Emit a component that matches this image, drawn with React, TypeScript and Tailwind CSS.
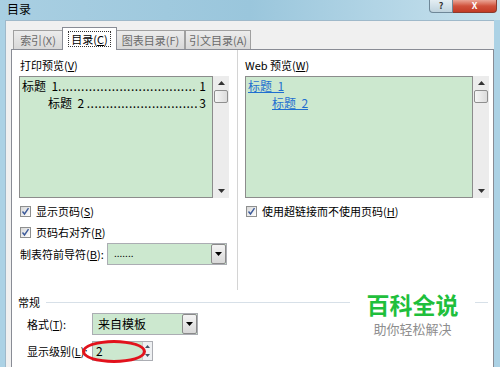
import React from "react";

const Check = () => (
  <span className="w-[11px] h-[11px] border border-[#8e8f8f] bg-linear-to-br from-[#d8d8d8] to-white flex items-center justify-center shrink-0">
    <svg width="9" height="9" viewBox="0 0 9 9">
      <path d="M1.5 4.5 L3.5 7 L7.5 1.2" stroke="#3c5a9a" strokeWidth="1.4" fill="none" />
    </svg>
  </span>
);

const DropBtn = () => (
  <span className="w-[15px] h-full border border-[#8a8a8a] rounded-[2px] bg-linear-to-b from-[#f4f4f4] to-[#d8d8d8] flex items-center justify-center shrink-0">
    <svg width="7" height="4" viewBox="0 0 7 4">
      <path d="M0 0 L7 0 L3.5 4 Z" fill="#000" />
    </svg>
  </span>
);

const ScrollBar = () => (
  <div className="w-[16px] h-full bg-[#ececec] flex flex-col items-center shrink-0">
    <div className="h-[14px] flex items-center justify-center">
      <svg width="7" height="4" viewBox="0 0 7 4">
        <path d="M0 4 L7 4 L3.5 0 Z" fill="#333" />
      </svg>
    </div>
    <div className="w-[14px] h-[13px] border border-[#8f8f8f] rounded-[2px] bg-linear-to-r from-[#f6f6f6] to-[#dcdcdc]" />
    <div className="flex-1" />
    <div className="h-[14px] flex items-center justify-center">
      <svg width="7" height="4" viewBox="0 0 7 4">
        <path d="M0 0 L7 0 L3.5 4 Z" fill="#333" />
      </svg>
    </div>
  </div>
);

const Tab = ({ label, acc, w, selected }: { label: string; acc: string; w: string; selected?: boolean }) =>
  selected ? (
    <div className={`${w} h-[23px] bg-white border border-b-0 border-[#898c95] -mx-px flex items-center justify-center relative z-10 text-black`}>
      <span className="border border-dotted border-[#333] px-[2px] leading-[14px]">
        {label}(<u>{acc}</u>)
      </span>
    </div>
  ) : (
    <div className={`${w} h-[20px] bg-linear-to-b from-[#ececec] to-[#d8d8d8] border border-[#a0a0a0] flex items-center justify-center text-[#6a6a6a]`}>
      <span>
        {label}({acc})
      </span>
    </div>
  );

export default function App() {
  return (
    <div className="w-[500px] h-[367px] overflow-hidden flex flex-col bg-[#acd2e5] relative font-['Noto_Sans_CJK_SC','Noto_Sans',sans-serif] text-[11px] text-black">
      {/* title bar */}
      <div className="h-[20px] flex items-start bg-linear-to-r from-[#a9cfe2] via-[#9ac6dc] to-[#c8e2ee] shrink-0">
        <span className="pl-[7px] text-[12px] leading-[18px] text-black">目录</span>
        <div className="ml-auto mr-[3px] flex">
          <div className="w-[24px] h-[13px] border border-[#6e8798] border-t-0 rounded-bl-[4px] bg-linear-to-b from-[#e4eef3] to-[#bfd3de] flex items-center justify-center text-[9px] leading-[12px] text-[#333] font-bold">
            ?
          </div>
          <div className="w-[44px] h-[13px] border border-[#8a3a2e] border-t-0 border-l-0 rounded-br-[4px] bg-linear-to-b from-[#e9a597] via-[#d0513c] to-[#c23a25] flex items-center justify-center text-[9px] leading-[12px] text-white font-bold">
            X
          </div>
        </div>
      </div>

      {/* body */}
      <div className="flex-1 ml-[5px] mr-[6px] bg-[#f0f0f0] border-l border-t border-[#9fb9ca] flex flex-col pt-[6px] pl-[5px]">
        {/* tabs */}
        <div className="flex items-end h-[23px] pl-[2px] shrink-0">
          <Tab label="索引" acc="X" w="w-[50px]" />
          <Tab label="目录" acc="C" w="w-[55px]" selected />
          <Tab label="图表目录" acc="F" w="w-[69px]" />
          <Tab label="引文目录" acc="A" w="w-[66px]" />
        </div>
        {/* panel */}
        <div className="flex-1 -mt-px bg-white border border-b-0 border-[#898c95] flex flex-col relative">
          <div className="flex h-[240px] shrink-0">
            {/* left section */}
            <div className="w-[226px] border-r border-[#d4d4d4] pl-[7px] flex flex-col">
              <div className="mt-[7px] h-[16px] leading-[16px] pl-px">
                打印预览(<u>V</u>)
              </div>
              <div className="mt-[3px] h-[122px] flex">
                <div className="w-[194px] h-full bg-[#cce8cf] border border-[#8c8c8c] pl-[2px] pr-[6px] text-[12px] leading-[17px]">
                  <div className="flex whitespace-nowrap">
                    <span className="shrink-0">标题&nbsp;&nbsp;1</span>
                    <span className="flex-1 min-w-0 overflow-hidden tracking-[0.5px]">{".".repeat(37)}</span>
                    <span className="shrink-0">&nbsp;1</span>
                  </div>
                  <div className="flex whitespace-nowrap pl-[26px]">
                    <span className="shrink-0">标题&nbsp;&nbsp;2&nbsp;</span>
                    <span className="flex-1 min-w-0 overflow-hidden tracking-[0.5px]">{".".repeat(30)}</span>
                    <span className="shrink-0">&nbsp;3</span>
                  </div>
                </div>
                <ScrollBar />
              </div>
              <div className="mt-[5px] h-[16px] flex items-center gap-[5px] pl-px">
                <Check />
                <span className="leading-[16px]">
                  显示页码(<u>S</u>)
                </span>
              </div>
              <div className="mt-[5px] h-[16px] flex items-center gap-[5px] pl-px">
                <Check />
                <span className="leading-[16px]">
                  页码右对齐(<u>R</u>)
                </span>
              </div>
              <div className="mt-[3px] h-[22px] flex items-center">
                <span className="w-[88px] pl-px">
                  制表符前导符(<u>B</u>):
                </span>
                <div className="w-[120px] h-[22px] border border-[#abadb3] bg-[#cce8cf] flex items-center">
                  <span className="flex-1 pl-[6px] leading-none text-[10px] -mt-[3px]">.......</span>
                  <DropBtn />
                </div>
              </div>
            </div>
            {/* right section */}
            <div className="flex-1 pl-[7px] pr-[4px] flex flex-col">
              <div className="mt-[7px] h-[16px] leading-[16px]">
                Web 预览(<u>W</u>)
              </div>
              <div className="mt-[3px] h-[122px] flex">
                <div className="flex-1 h-full bg-[#cce8cf] border border-[#8c8c8c] pl-[2px] text-[12px] leading-[17px] text-[#1f6fd0]">
                  <div>
                    <span className="underline">标题&nbsp;&nbsp;1</span>
                  </div>
                  <div className="pl-[24px]">
                    <span className="underline">标题&nbsp;&nbsp;2</span>
                  </div>
                </div>
                <ScrollBar />
              </div>
              <div className="mt-[5px] h-[16px] flex items-center gap-[5px] pl-px">
                <Check />
                <span className="leading-[16px]">
                  使用超链接而不使用页码(<u>H</u>)
                </span>
              </div>
            </div>
          </div>

          {/* general group */}
          <div className="mt-[4px] h-[16px] flex items-center pl-[6px] pr-[5px]">
            <span className="leading-[16px]">常规</span>
            <div className="flex-1 ml-[6px] h-px bg-[#d7e0e8]" />
          </div>
          <div className="mt-[3px] h-[22px] flex items-center pl-[15px]">
            <span className="w-[65px]">
              格式(<u>T</u>):
            </span>
            <div className="w-[106px] h-[22px] border border-[#abadb3] bg-[#cce8cf] flex items-center">
              <span className="flex-1 pl-[5px] text-[12px]">来自模板</span>
              <DropBtn />
            </div>
          </div>
          <div className="mt-[6px] h-[20px] flex items-center pl-[15px]">
            <span className="w-[65px]">
              显示级别(<u>L</u>):
            </span>
            <div className="relative w-[61px] h-[20px] border border-[#abadb3] bg-[#cce8cf] flex items-center">
              <span className="flex-1 pl-[3px] text-[12px]">2</span>
              <div className="w-[10px] h-full flex flex-col border-l border-[#c8c8c8] bg-[#eef0f2]">
                <div className="flex-1 flex items-center justify-center">
                  <svg width="5" height="3" viewBox="0 0 5 3">
                    <path d="M0 3 L5 3 L2.5 0 Z" fill="#456" />
                  </svg>
                </div>
                <div className="flex-1 flex items-center justify-center">
                  <svg width="5" height="3" viewBox="0 0 5 3">
                    <path d="M0 0 L5 0 L2.5 3 Z" fill="#456" />
                  </svg>
                </div>
              </div>
              <div className="absolute left-[-11px] top-[-2px] w-[64px] h-[23px] rounded-[50%] border-[3px] border-[#e2121c]" />
            </div>
          </div>

          {/* watermark */}
          <div className="absolute left-[338px] top-[241px] w-[125px] bg-white flex flex-col items-center">
            <span className="text-[23px] leading-[26px] font-bold text-[#1fbf3c]">百科全说</span>
            <span className="mt-[4px] text-[13px] leading-[15px] text-[#8e8e8e]">助你轻松解决</span>
          </div>
        </div>
      </div>
      <div className="absolute right-0 top-[20px] w-[6px] bottom-0 bg-[#acd2e5]" />
    </div>
  );
}
